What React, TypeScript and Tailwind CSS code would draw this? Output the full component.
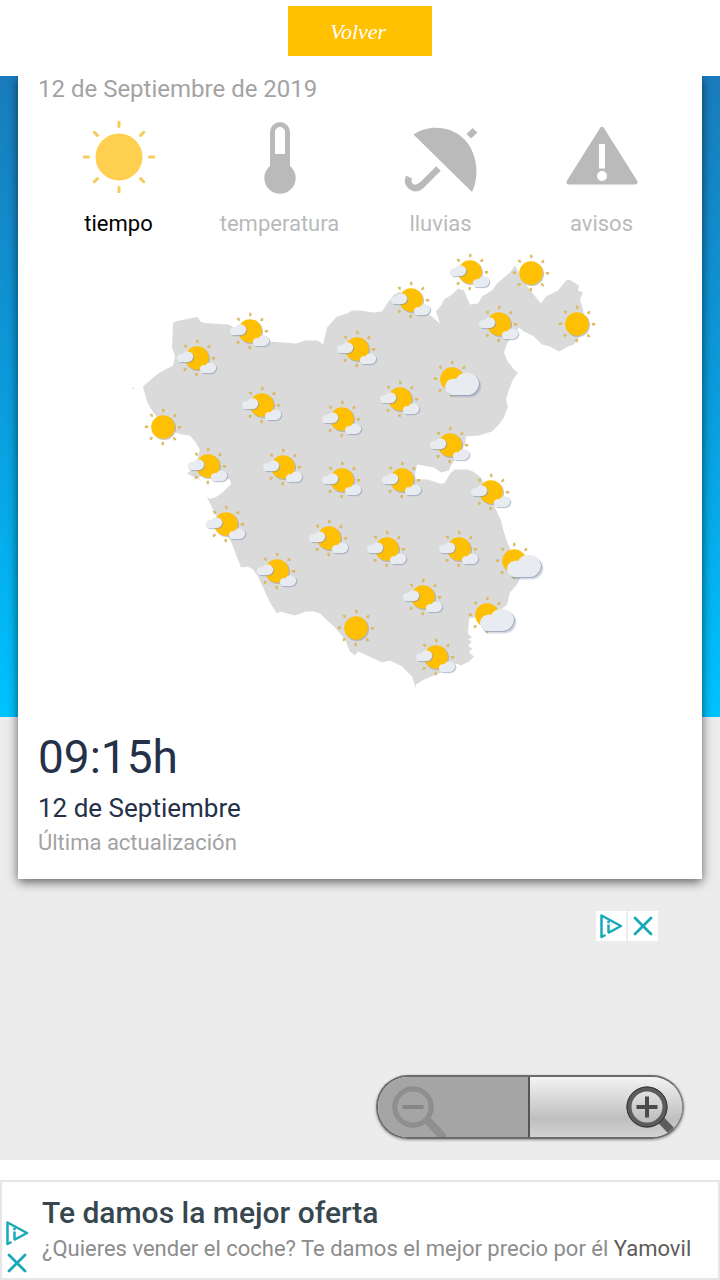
import React from 'react';

type Sky = 'sunny' | 'partly' | 'cloudy';

const places: { x: number; y: number; sky: Sky }[] = [
  { x: 250, y: 331, sky: 'partly' },
  { x: 197, y: 358, sky: 'partly' },
  { x: 262, y: 405, sky: 'partly' },
  { x: 357, y: 349, sky: 'partly' },
  { x: 342, y: 419, sky: 'partly' },
  { x: 208, y: 466, sky: 'partly' },
  { x: 283, y: 467, sky: 'partly' },
  { x: 342, y: 480, sky: 'partly' },
  { x: 226, y: 524, sky: 'partly' },
  { x: 277, y: 571, sky: 'partly' },
  { x: 329, y: 538, sky: 'partly' },
  { x: 387, y: 549, sky: 'partly' },
  { x: 459, y: 549, sky: 'partly' },
  { x: 423, y: 597, sky: 'partly' },
  { x: 436, y: 657, sky: 'partly' },
  { x: 402, y: 480, sky: 'partly' },
  { x: 491, y: 492, sky: 'partly' },
  { x: 400, y: 399, sky: 'partly' },
  { x: 450, y: 445, sky: 'partly' },
  { x: 411, y: 300, sky: 'partly' },
  { x: 470, y: 272, sky: 'partly' },
  { x: 499, y: 324, sky: 'partly' },
  { x: 163, y: 427, sky: 'sunny' },
  { x: 531, y: 273, sky: 'sunny' },
  { x: 577, y: 324, sky: 'sunny' },
  { x: 356, y: 628, sky: 'sunny' },
  { x: 452, y: 379, sky: 'cloudy' },
  { x: 514, y: 561, sky: 'cloudy' },
  { x: 487, y: 615, sky: 'cloudy' },
];

const angles = [0, 45, 90, 135, 180, 225, 270, 315];

const cloud = 'M8 25a7.500 8 0 0 1-1-16q2-1 4 0A12.500 12.500 0 0 1 34 12.500A11.500 12.500 0 0 1 23 25Z';

const Cloud = ({ x, y, scale }: { x: number; y: number; scale: number }) => (
  <g transform={`translate(${x} ${y}) scale(${scale})`}>
    <path d={cloud} fill="#7f8cad" opacity="0.3" transform="translate(2.5 2.5)" />
    <path d={cloud} fill="#8f9bb8" opacity="0.7" transform="translate(1 1)" />
    <path d={cloud} fill="#e8ecf0" />
  </g>
);

const SkyIcon = ({ x, y, sky }: { x: number; y: number; sky: Sky }) => (
  <g transform={`translate(${x} ${y})`}>
    {angles.map((a) => (
      <g key={a} transform={`rotate(${a})`}>
        <path d="M1 -15.500v-2" stroke="#a5a58f" strokeWidth="2" opacity="0.5" />
        <path d="M0 -15.500v-2" stroke="#dfbb55" strokeWidth="1.800" strokeLinecap="round" />
      </g>
    ))}
    <circle cx="1" cy="1" r="12" fill="#8d8d8d" opacity="0.5" />
    <circle r="11.8" fill="#ffbf03" />
    {sky === 'partly' && (
      <>
        <Cloud x={-20} y={-8} scale={0.48} />
        <Cloud x={3} y={3} scale={0.48} />
      </>
    )}
    {sky === 'cloudy' && <Cloud x={-7} y={-9} scale={1} />}
  </g>
);

const WeatherMap = () => (
  <svg viewBox="18 248 684 452" className="block w-full" role="img" aria-label="Mapa del tiempo">
    <path
      fill="#dadada"
      d="M173 323l4-2 20-4 4 5 4 1 23 1.500 7 3 35 14 26 2 9-3h13l5 4 4-17 10-11 10-3 5-3h8l13 2 9-1 6-9 5-7 7-4 20 18 12 7 8 7-4-12 5-6 3-6 8-5 6-6 6 2 6 14 8-1 4-7 10-6 5-7 13-11 5-7 6 11 7 11 13 16 5-7 12-6 8-10 3-1 10 6-1 5 5 2-3 7 3 10 2 12-4 13-7 10-6 2-9 5-9-5-8-2-8-8-10-5-5-4-7 9-5 7-3 9 3 8 7 9 4 3-5 7-4 10-3 10 2 8-2 4-2 6-5 7-7 7-13 4-13 1-1 8-14 21-2 5-8 2-7-5-17-3-2 9 1 6h12l12 4h4l7-11 4-3h12l6 2 8 6 14 30 6 13 3 12 4 12 5 10 8 22-4 8-7 8-3 12-12 10-26 4-1 15 4 4-4 2 4 2-4 4 4 3-3 4 5 4-5 5-8 4-5-2-17 10-15 6-8 5v4l-4-12-10-10-12-6-8 2-17-8-7-3-3 4-5-4-5-12-10-12-15-14-6-2h-8l-11 4-15-4-3 2-7-11-12-26-5-7-5-3-7 1-10-26-6-8-17-34-9-20-12-6 8-6 5-18-5-8-5-6-8-1-7-2-12-8-11-14-5-9-4-15 7-6 3-3 7-5 13-7 2-9-3-9z"
    />
    <circle cx="133.500" cy="388.500" r="1" fill="#dadada" />
    <path fill="#fff" d="M199 477l9-3 12 1 10 5 1 4-4 4-5 5-6 4-6 2-8-5z" />
    {places.map((p) => (
      <SkyIcon key={`${p.x}-${p.y}`} {...p} />
    ))}
  </svg>
);

const SunIcon = () => (
  <svg viewBox="0 0 72 72" className="size-18" fill="#ffcf4f" stroke="#f5cb5c">
    <circle cx="36" cy="36" r="23.500" stroke="none" />
    {angles.map((a) => (
      <path key={a} d="M36 1v4.500" strokeWidth="3" strokeLinecap="round" transform={`rotate(${a} 36 36)`} />
    ))}
  </svg>
);

const ThermometerIcon = () => (
  <svg viewBox="0 0 72 72" className="size-18 overflow-visible" fill="#bababa">
    <path
      fillRule="evenodd"
      d="M26 11a10 10 0 0 1 20 0v34a15.700 15.700 0 1 1-20 0zM31 11v22h10V11a5 5 0 0 0-10 0z"
    />
  </svg>
);

const UmbrellaIcon = () => (
  <svg viewBox="0 0 72 72" className="size-18 overflow-visible" fill="#bababa">
    <path d="M8.500 13.500C24 3 46 5 59 18S75 54 67 71Z" />
    <path d="M61.500 13l6-6 5 4.500-6.500 6z" />
    <path
      d="M33.500 47.500L17.500 63.500Q11 69.500 6 65.500Q1.500 62 4 56"
      fill="none"
      stroke="#bababa"
      strokeWidth="6.500"
    />
  </svg>
);

const WarningIcon = () => (
  <svg viewBox="0 0 72 72" className="size-18" fill="#bababa">
    <path
      d="M36 8.500L69 61H3z"
      stroke="#bababa"
      strokeWidth="5"
      strokeLinejoin="round"
    />
    <path d="M33 23h6v24.500h-6z" fill="#fff" />
    <circle cx="36" cy="55" r="5" fill="#fff" />
  </svg>
);

const tabs = [
  { label: 'tiempo', icon: <SunIcon />, active: true },
  { label: 'temperatura', icon: <ThermometerIcon />, active: false },
  { label: 'lluvias', icon: <UmbrellaIcon />, active: false },
  { label: 'avisos', icon: <WarningIcon />, active: false },
];

const AdChoicesIcon = () => (
  <svg viewBox="0 0 30 30" className="size-[30px]" fill="none" stroke="#17a9b8" strokeWidth="2.500" strokeLinejoin="round">
    <path d="M9.500 24L5.500 26V4.500L25 15L12 22" />
    <path d="M12.500 13.500v8" />
    <circle cx="12.500" cy="11" r="1.400" fill="#17a9b8" stroke="none" />
  </svg>
);

const CloseIcon = () => (
  <svg viewBox="0 0 30 30" className="size-[30px]" fill="none" stroke="#17a9b8" strokeWidth="2.800" strokeLinecap="round">
    <path d="M7 7l16 16M23 7L7 23" />
  </svg>
);

const ZoomIcon = ({ plus }: { plus?: boolean }) => (
  <svg viewBox="0 0 60 60" className="size-[60px]" fill="none" stroke={plus ? '#5c5c5c' : '#8f8f8f'}>
    <path d="M41 43L60 63" strokeWidth="8" />
    <circle cx="27" cy="30" r="18" strokeWidth="5" />
    <circle cx="27" cy="30" r="20" strokeWidth="1" stroke={plus ? '#333' : '#8b8b8b'} />
    <path d="M16.500 30h21" strokeWidth="4" stroke={plus ? '#4a4a4a' : '#868686'} />
    {plus && <path d="M27 19.500v21" strokeWidth="4" stroke="#4a4a4a" />}
  </svg>
);

const App = () => {
  return (
    <div className="min-h-screen bg-white font-['Roboto',sans-serif]">
      <header className="flex h-19 items-start justify-center bg-white pt-1.5">
        <button
          type="button"
          className="h-[50px] w-36 bg-[#ffc000] pr-1 font-['Liberation_Serif',serif] text-[22px] text-white italic"
        >
          Volver
        </button>
      </header>

      <main className="bg-[#ececec] bg-[linear-gradient(#1a7cbc,#0b9cdc_50%,#00c3ff)] bg-[length:100%_641px] bg-no-repeat px-[18px] pb-[21px]">
        <section className="bg-white shadow-[0_3px_10px_rgba(0,0,0,0.6)] [clip-path:inset(0_-18px_-18px)]">
          <p className="px-5 text-2xl leading-[26px] text-[#a3a3a3]">12 de Septiembre de 2019</p>

          {/* Layer tabs */}
          <nav className="mt-[19px] grid grid-cols-4 px-5">
            {tabs.map((tab) => (
              <button
                key={tab.label}
                type="button"
                className={`flex flex-col items-center gap-[17px] text-[22px] leading-7 ${
                  tab.active ? 'text-black' : 'text-[#bababa]'
                }`}
              >
                {tab.icon}
                {tab.label}
              </button>
            ))}
          </nav>

          <div className="mt-2.5">
            <WeatherMap />
          </div>

          {/* Last update */}
          <div className="px-5 pt-[27px] pb-[18px] text-[#253148]">
            <p className="text-[46px] leading-[60px]">09:15h</p>
            <p className="mt-1 text-[26px] leading-[34px]">12 de Septiembre</p>
            <p className="text-[22px] leading-9 text-[#a3a3a3]">Última actualización</p>
          </div>
        </section>

        <div className="mt-8 mr-[44px] flex justify-end gap-0.5">
          <button type="button" aria-label="AdChoices" className="bg-white">
            <AdChoicesIcon />
          </button>
          <button type="button" aria-label="Cerrar anuncio" className="bg-white">
            <CloseIcon />
          </button>
        </div>

        {/* Zoom controls */}
        <div className="mt-[134px] mr-[18px] flex justify-end">
          <div className="flex h-16 w-[308px] overflow-hidden rounded-full border-2 border-[#6b6b6b] border-r-[#858585] shadow-[0_1px_3px_rgba(0,0,0,0.4)]">
            <button type="button" aria-label="Alejar" className="flex w-1/2 border-r-2 border-[#555] bg-[#a5a5a5] pl-2">
              <ZoomIcon />
            </button>
            <button
              type="button"
              aria-label="Acercar"
              className="flex w-1/2 justify-end bg-[linear-gradient(#f3f3f3,#d2d2d2_45%,#bfbfbf_70%,#d2d2d2)] pr-0.5"
            >
              <ZoomIcon plus />
            </button>
          </div>
        </div>
      </main>

      <footer className="mt-5 flex h-[100px] border-2 border-[#e6e6e6] bg-white">
        <div className="flex w-10 flex-col justify-end">
          <button type="button" aria-label="AdChoices">
            <AdChoicesIcon />
          </button>
          <button type="button" aria-label="Cerrar anuncio">
            <CloseIcon />
          </button>
        </div>
        <a href="#" className="flex-1 pt-[13px] whitespace-nowrap">
          <h2 className="text-[30px] leading-9 font-medium text-[#37474f]">Te damos la mejor oferta</h2>
          <p className="text-[22px] leading-9 text-[#8c8c8c]">
            ¿Quieres vender el coche? Te damos el mejor precio por él <span className="text-[#5c5c5c]">Yamovil</span>
          </p>
        </a>
      </footer>
    </div>
  );
};

export default App;
